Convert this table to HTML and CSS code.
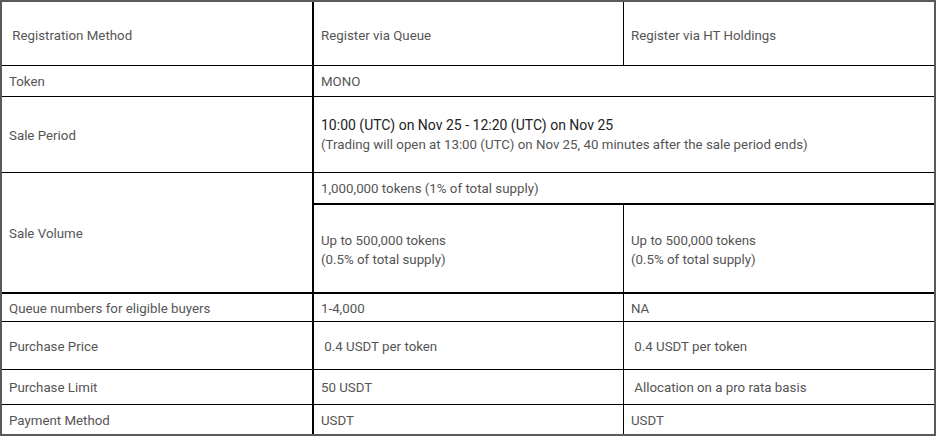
FILE: index.html
```html
<!DOCTYPE html>
<html>
<head>
<meta charset="utf-8">
<link rel="stylesheet" href="styles.css">
</head>
<body>
<div class="table">
  <div class="cell c1 head">&nbsp;Registration Method</div>
  <div class="cell c2 head">Register via Queue</div>
  <div class="cell c3 head">Register via HT Holdings</div>

  <div class="cell c1">Token</div>
  <div class="cell span">MONO</div>

  <div class="cell c1">Sale Period</div>
  <div class="cell span period">
    <div class="main">10:00 (UTC) on Nov 25 - 12:20 (UTC) on Nov 25</div>
    <div>(Trading will open at 13:00 (UTC) on Nov 25, 40 minutes after the sale period ends)</div>
  </div>

  <div class="cell c1 volume thick">Sale Volume</div>
  <div class="cell span thick">1,000,000 tokens (1% of total supply)</div>
  <div class="cell c2 thick stack">
    <div>Up to 500,000 tokens</div>
    <div>(0.5% of total supply)</div>
  </div>
  <div class="cell c3 thick stack">
    <div>Up to 500,000 tokens</div>
    <div>(0.5% of total supply)</div>
  </div>

  <div class="cell c1">Queue numbers for eligible buyers</div>
  <div class="cell c2">1-4,000</div>
  <div class="cell c3">NA</div>

  <div class="cell c1">Purchase Price</div>
  <div class="cell c2">&nbsp;0.4 USDT per token</div>
  <div class="cell c3">&nbsp;0.4 USDT per token</div>

  <div class="cell c1">Purchase Limit</div>
  <div class="cell c2">50 USDT</div>
  <div class="cell c3">&nbsp;Allocation on a pro rata basis</div>

  <div class="cell c1 last">Payment Method</div>
  <div class="cell c2 last">USDT</div>
  <div class="cell c3 last">USDT</div>
</div>
</body>
</html>
```

FILE: styles.css
```css
html, body {
  margin: 0;
  padding: 0;
  background: #ffffff;
}

.table {
  box-sizing: border-box;
  width: 936px;
  height: 436px;
  border: 2px solid #5a5a5a;
  display: grid;
  grid-template-columns: 312px 310px 310px;
  grid-template-rows: 64px 31px 76px 32px 89px 28px 48px 35px 29px;
  font-family: Roboto, "Liberation Sans", sans-serif;
  font-size: 13.3px;
  color: #555555;
  background: #ffffff;
}

.cell {
  box-sizing: border-box;
  display: flex;
  flex-direction: column;
  justify-content: center;
  padding: 1px 7px 0;
  border-bottom: 1px solid #000000;
  line-height: 19px;
  white-space: nowrap;
}

.head {
  padding-top: 3px;
}

.c1 {
  border-right: 2px solid #000000;
}

.c2 {
  border-right: 1px solid #000000;
}

.span {
  grid-column: 2 / 4;
}

.volume {
  grid-row: 4 / 6;
}

.thick {
  border-bottom-width: 2px;
}

.last {
  border-bottom: none;
}

.period .main {
  color: #222222;
  font-size: 14px;
}

.stack {
  padding-top: 2px;
}
```
